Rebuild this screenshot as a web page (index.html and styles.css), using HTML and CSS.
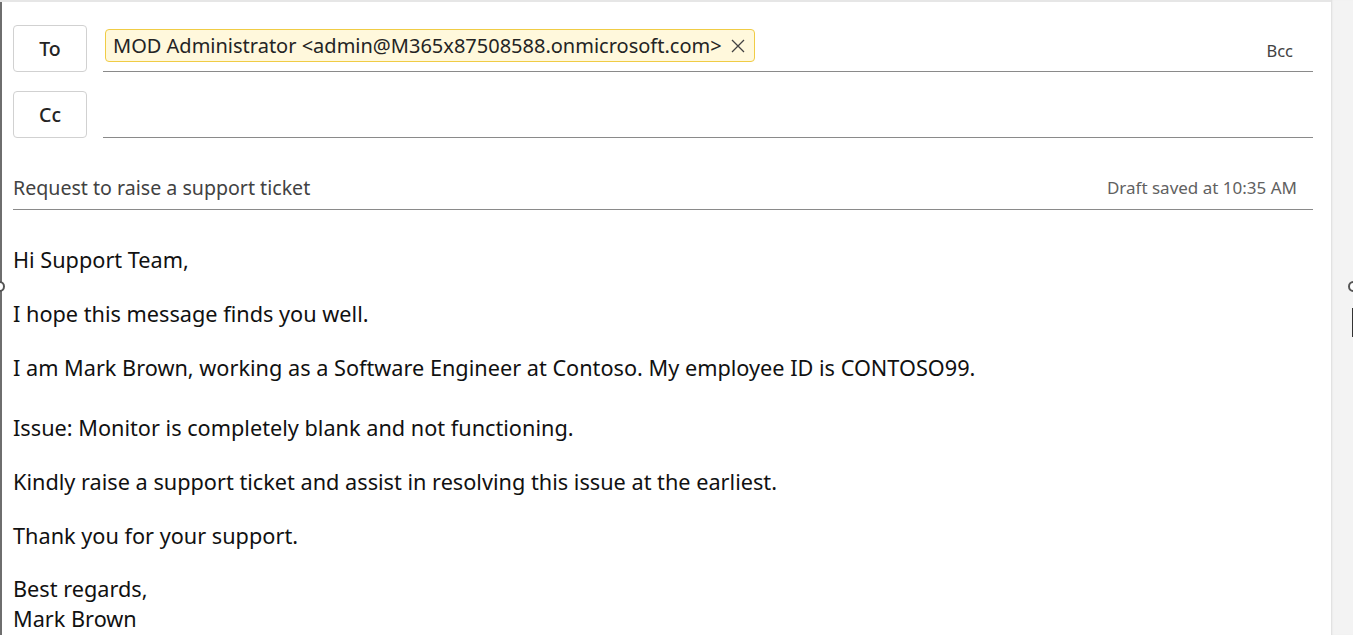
FILE: index.html
```html
<!DOCTYPE html>
<html lang="en">
<head>
<meta charset="utf-8">
<title>Compose</title>
<link rel="stylesheet" href="styles.css">
</head>
<body>
<div class="app">
  <main class="compose">
    <div class="topline"></div>
    <div class="headers">
      <div class="row">
        <button class="label-btn">To</button>
        <div class="field">
          <span class="chip">MOD Administrator &lt;admin@M365x87508588.onmicrosoft.com&gt;
            <svg class="chip-x" width="16" height="16" viewBox="0 0 16 16"><path d="M2 2 L14 14 M14 2 L2 14" stroke="#424242" stroke-width="1.3" fill="none"/></svg>
          </span>
          <span class="bcc">Bcc</span>
        </div>
      </div>
      <div class="row">
        <button class="label-btn">Cc</button>
        <div class="field"></div>
      </div>
      <div class="subject">
        <span class="subject-text">Request to raise a support ticket</span>
        <span class="draft">Draft saved at 10:35 AM</span>
      </div>
    </div>
    <div class="body-frame">
      <span class="handle handle-left"></span>
      <span class="handle handle-right"></span>
      <span class="handle handle-bottom"></span>
      <span class="caret"></span>
      <div class="message">
        <p>Hi Support Team,</p>
        <p>I hope this message finds you well.</p>
        <p>I am Mark Brown, working as a Software Engineer at Contoso. My employee ID is CONTOSO99.</p>
        <p class="gap">Issue: Monitor is completely blank and not functioning.</p>
        <p>Kindly raise a support ticket and assist in resolving this issue at the earliest.</p>
        <p>Thank you for your support.</p>
        <p class="sig">Best regards,<br>Mark Brown</p>
      </div>
    </div>
  </main>
  <aside class="side"></aside>
</div>
</body>
</html>
```
FILE: styles.css
```css
* { box-sizing: border-box; }
html, body { margin: 0; height: 100%; overflow: hidden; background: #fff; }
body { font-family: "Noto Sans", "Open Sans", sans-serif; color: #242424; }

.app { display: flex; height: 635px; }
.compose {
  flex: 1;
  position: relative;
  border-left: 2px solid #6e6e6e;
  display: flex;
  flex-direction: column;
}
.side {
  width: 22px;
  background: #f3f3f3;
  box-shadow: inset 2px 0 2px -1px #dcdcdc;
}
.topline { height: 7px; border-bottom: 2px solid #e6e6e6; margin-left: -2px; }

.headers { padding: 23px 18px 0 11px; }
.row { display: flex; align-items: stretch; gap: 16px; margin-bottom: 19px; }
.row:nth-child(2) { margin-bottom: 0; }
.label-btn {
  width: 74px; height: 47px;
  border: 1px solid #d1d1d1; border-radius: 4px; background: #fff;
  font-family: "Noto Sans", sans-serif; font-size: 19.5px; font-weight: 500; color: #242424;
  padding: 0;
}
.field {
  flex: 1; display: flex; align-items: center; justify-content: space-between;
  border-bottom: 1px solid #8a8a8a; padding-left: 2px; padding-right: 20px;
}
.row:first-child .field { align-items: flex-start; padding-top: 4px; }
.chip {
  display: inline-flex; align-items: center; gap: 8px;
  height: 33px; padding: 0 8px 0 7px;
  background: #fff8dc; border: 1px solid #f0cc45; border-radius: 4px;
  font-size: 20px; color: #242424; white-space: nowrap;
}
.bcc { font-size: 16.5px; color: #424242; margin-top: 10px; }

.subject {
  display: flex; justify-content: space-between; align-items: center;
  height: 45px; margin-top: 27px;
  border-bottom: 1px solid #8a8a8a; padding-right: 16px;
}
.subject-text { font-size: 19.6px; color: #424242; }
.draft { font-size: 17px; color: #616161; }

.body-frame { flex: 1; position: relative; padding: 0 18px 0 11px; }
.message { font-family: "Noto Sans", sans-serif; font-size: 21.7px; color: #111; padding-top: 35px; }
.message p { margin: 0 0 24px; line-height: 30px; }
.message p.gap { margin-top: 30px; }
.message p.sig { margin-top: -1px; }

.handle {
  position: absolute; width: 11px; height: 11px; border: 2px solid #555; border-radius: 50%; background: #fff;
}
.handle-left { left: -8px; top: 71px; }
.handle-right { right: -28px; top: 71px; }
.handle-bottom { left: 671px; bottom: -6px; }
.caret { position: absolute; right: -24px; top: 98px; width: 3px; height: 29px; background: #333; }
```
